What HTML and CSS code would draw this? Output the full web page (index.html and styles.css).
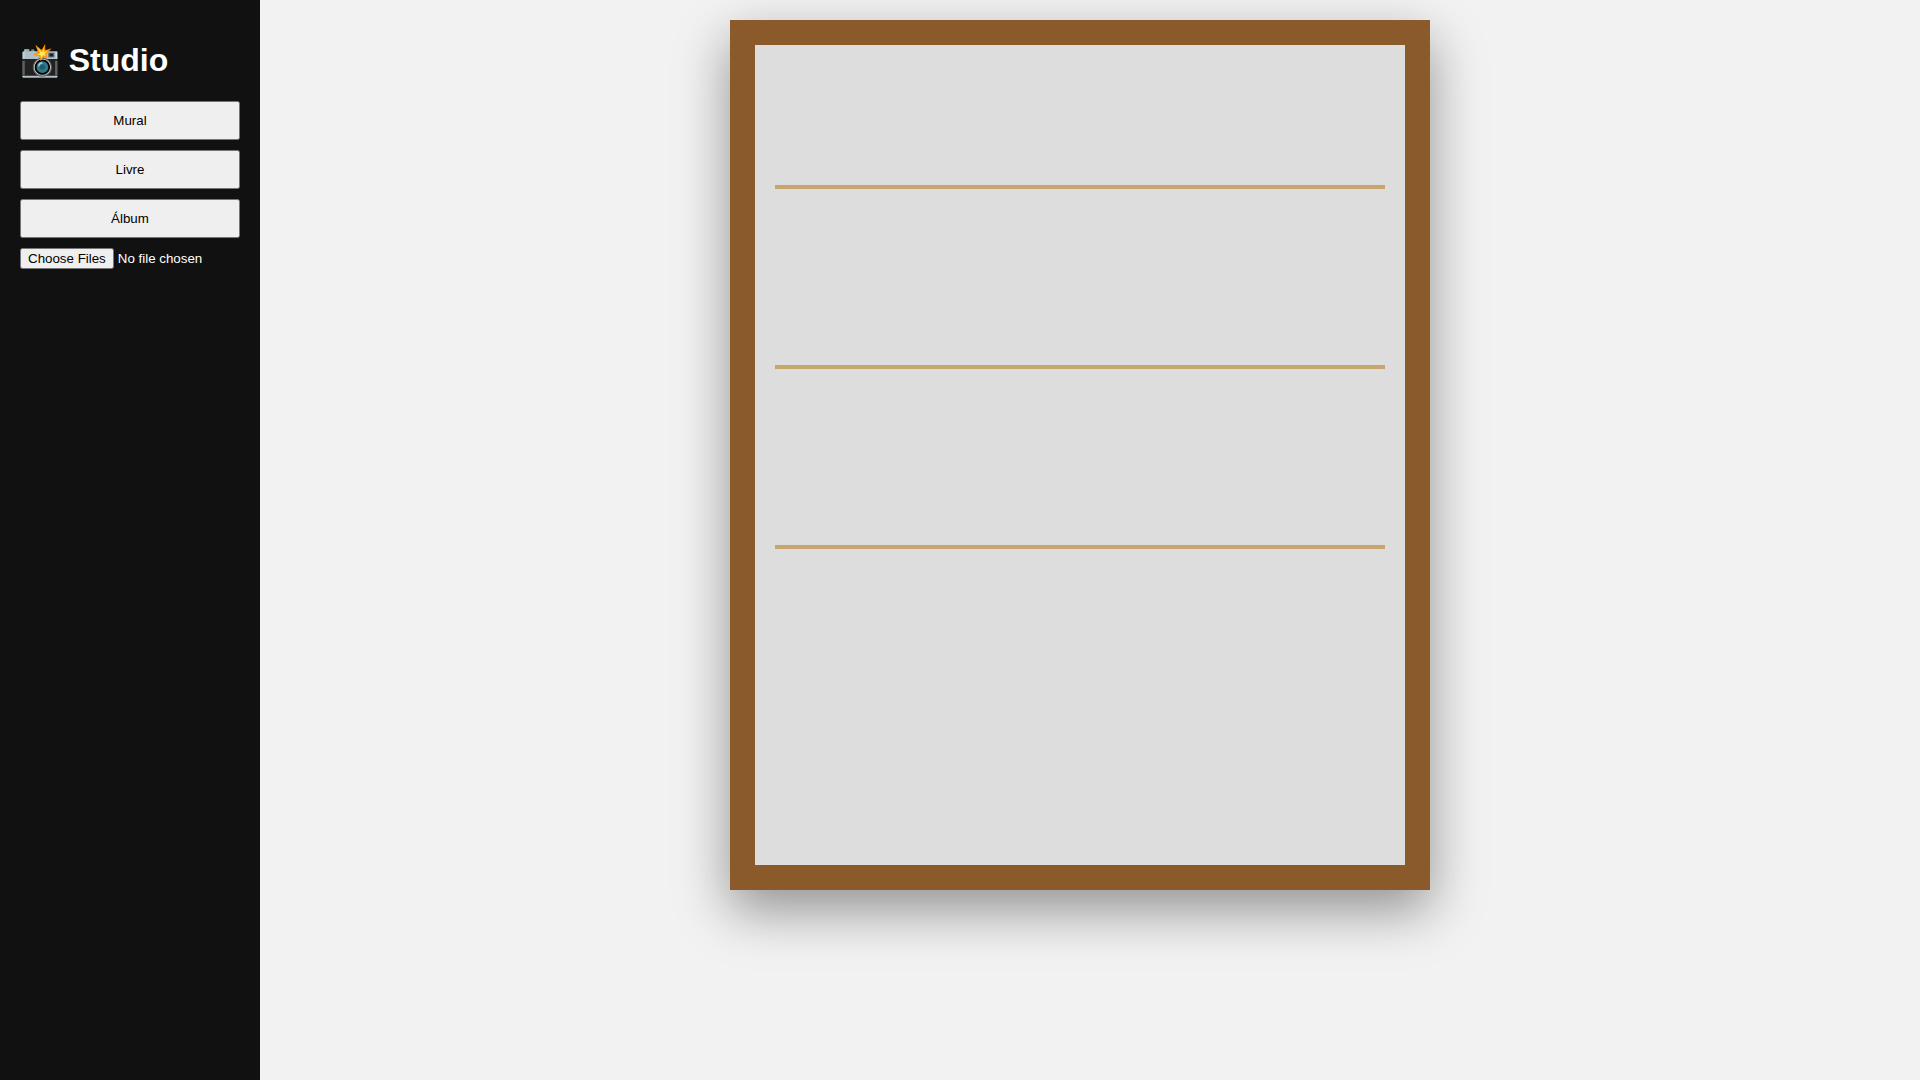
FILE: index.html
```html
<!DOCTYPE html>
<html lang="pt">

<head>
    <meta charset="UTF-8">
    <title>Studio</title>
    <link rel="stylesheet" href="styles.css">
</head>

<body>
    <div class="sidebar">
        <h1>📸 Studio</h1>
        <button class="mode-button">Mural</button>
        <button class="mode-button">Livre</button>
        <button class="mode-button">Álbum</button>
        <input type="file" multiple>
    </div>
    <div class="main">
        <!-- moldura -->
        <div class="frame">
            <div class="shelf"></div>
            <div class="shelf"></div>
            <div class="shelf"></div>
        </div>
    </div>
</body>

</html>
```

FILE: styles.css
```css
body {
    margin: 0px;
    display: flex;
    height: 100vh;
    overflow: hidden;
    background: #f2f2f2;
    font-family: "Liberation Sans", Arial, "Noto Color Emoji", sans-serif;
}

.sidebar {
    box-sizing: border-box;
    width: 260px;
    flex-shrink: 0;
    padding: 20px;
    background: #111111;
    color: #ffffff;
}

.mode-button {
    display: block;
    width: 100%;
    padding: 10px;
    margin-bottom: 10px;
    font-family: "Liberation Sans", Arial, sans-serif;
}

.main {
    flex: 1;
    display: flex;
    justify-content: center;
    align-items: flex-start;
    padding: 20px 20px 20px 0px;
}

.frame {
    box-sizing: border-box;
    width: 700px;
    height: 870px;
    padding: 20px;
    border: 25px solid #8b5a2b;
    background: #dddddd;
    box-shadow: 0px 20px 50px rgba(0, 0, 0, .4);
}

.shelf {
    height: 120px;
    margin-bottom: 56px;
    border-bottom: 4px solid #c8a46e;
}
```
